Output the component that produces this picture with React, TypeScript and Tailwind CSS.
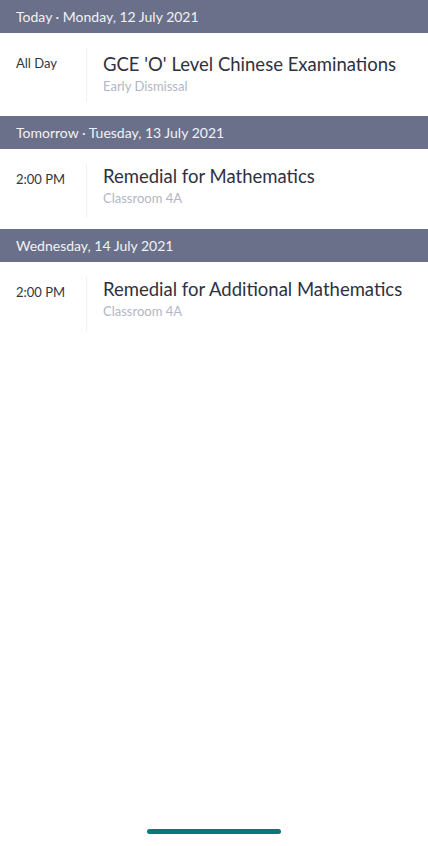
const days = [
  {
    label: "Today · Monday, 12 July 2021",
    events: [
      { time: "All Day", title: "GCE 'O' Level Chinese Examinations", sub: "Early Dismissal", first: true },
    ],
  },
  {
    label: "Tomorrow · Tuesday, 13 July 2021",
    events: [{ time: "2:00 PM", title: "Remedial for Mathematics", sub: "Classroom 4A", first: false }],
  },
  {
    label: "Wednesday, 14 July 2021",
    events: [{ time: "2:00 PM", title: "Remedial for Additional Mathematics", sub: "Classroom 4A", first: false }],
  },
];

export default function App() {
  return (
    <div className="flex flex-col w-[428px] h-[846px] bg-white font-['Lato',sans-serif]">
      <div className="grow">
        {days.map((day) => (
          <div key={day.label}>
            <div className="h-[33px] flex items-center px-4 bg-[#6a7089] text-[#f1f2f6] text-[14px]">
              {day.label}
            </div>
            {day.events.map((ev) => (
              <div key={ev.title} className={ev.first ? "flex pt-[15px] pb-[14px]" : "flex pt-[15px] pb-[11px]"}>
                <div className="w-[86px] shrink-0 pl-4 pt-[6px] text-[13px] text-[#33343f]">{ev.time}</div>
                <div className="h-[54px] w-px bg-[#f0f0f2]" />
                <div className={ev.first ? "pl-4 pt-[4px] flex flex-col" : "pl-4 flex flex-col"}>
                  <div className="text-[18.5px] leading-[24px] text-[#2f3040]">{ev.title}</div>
                  <div className="text-[13px] leading-[20px] text-[#b3b5c6]">{ev.sub}</div>
                </div>
              </div>
            ))}
          </div>
        ))}
      </div>
      <div className="flex justify-center pb-[12px]">
        <div className="w-[134px] h-[5px] rounded-full bg-[#007b7a]" />
      </div>
    </div>
  );
}
